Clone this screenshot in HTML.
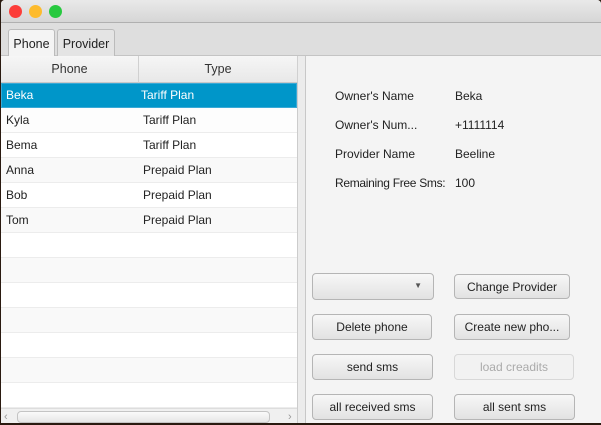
<!DOCTYPE html>
<html><head><style>
*{margin:0;padding:0;box-sizing:border-box}
body{width:601px;height:425px;background:#2a1a10;font-family:"Liberation Sans",sans-serif;font-size:12px;color:#222;position:relative;overflow:hidden}
.win{position:absolute;left:1px;top:0;width:600px;height:423px;background:#f4f4f4;overflow:hidden;border-radius:4px 4px 0 0}
.title{position:absolute;left:0;top:0;width:600px;height:23px;background:linear-gradient(#e9e9e9,#d6d6d6);border-bottom:1px solid #b0b0b0}
.dot{position:absolute;top:5px;width:13px;height:13px;border-radius:50%}
.tabs{position:absolute;left:0;top:23px;width:600px;height:33px;background:#dedede;border-bottom:1px solid #c4c4c4}
.tab{position:absolute;top:6px;height:27px;border:1px solid #bbb;border-bottom:none;border-radius:3px 3px 0 0;padding:7px 0 0;text-align:center;font-size:12.5px}
.table{position:absolute;left:0;top:56px;width:297px;height:367px;background:#fff;border-right:1px solid #ccc}
.hdr{position:absolute;top:0;height:27px;background:linear-gradient(#f6f6f6,#e8e8e8);border-right:1px solid #d0d0d0;border-bottom:1px solid #c8c8c8;text-align:center;line-height:27px;font-size:12.5px;color:#333}
.row{position:absolute;left:0;width:296px;height:25px;border-bottom:1px solid #ececec}
.row span{position:absolute;top:5px}
.c1{left:5px}.c2{left:142px}
.vl{position:absolute;left:137px;top:27px;width:1px;height:327px;background:#ececec}
.split{position:absolute;left:297px;top:56px;width:8px;height:367px;background:#ececec;border-right:1px solid #c8c8c8}
.lbl{position:absolute;font-size:12px;color:#222}
.btn{position:absolute;width:122px;height:26px;border:1px solid #b5b5b5;border-radius:4px;background:linear-gradient(#f7f7f7,#e2e2e2);text-align:center;line-height:24px;font-size:12px;color:#222}
</style></head><body>
<div class="win">
<div class="title">
<div class="dot" style="left:8px;background:#fc3d39"></div>
<div class="dot" style="left:28px;background:#fdbb2d"></div>
<div class="dot" style="left:48px;background:#27c93f"></div>
</div>
<div class="tabs">
<div class="tab" style="left:7px;width:47px;background:#f4f4f4;height:28px">Phone</div>
<div class="tab" style="left:56px;width:58px;background:#e4e4e4">Provider</div>
</div>
<div class="table">
<div class="hdr" style="left:0;width:138px">Phone</div>
<div class="hdr" style="left:138px;width:159px">Type</div>
<div class="vl"></div>
<div class="row" style="top:27px;background:#0096c9;color:#fff;border:1px solid #39a9d6"><span style="left:4px;top:4px">Beka</span><span style="left:139px;top:4px">Tariff Plan</span></div>
<div class="row" style="top:52px;background:#fdfdfd"><span class="c1">Kyla</span><span class="c2">Tariff Plan</span></div>
<div class="row" style="top:77px;background:#fff"><span class="c1">Bema</span><span class="c2">Tariff Plan</span></div>
<div class="row" style="top:102px;background:#f9f9f9"><span class="c1">Anna</span><span class="c2">Prepaid Plan</span></div>
<div class="row" style="top:127px;background:#fff"><span class="c1">Bob</span><span class="c2">Prepaid Plan</span></div>
<div class="row" style="top:152px;background:#f9f9f9"><span class="c1">Tom</span><span class="c2">Prepaid Plan</span></div>
<div class="row" style="top:177px;background:#fff"></div>
<div class="row" style="top:202px;background:#f9f9f9"></div>
<div class="row" style="top:227px;background:#fff"></div>
<div class="row" style="top:252px;background:#f9f9f9"></div>
<div class="row" style="top:277px;background:#fff"></div>
<div class="row" style="top:302px;background:#f9f9f9"></div>
<div class="row" style="top:327px;background:#fff"></div>
<div style="position:absolute;left:0;top:352px;width:296px;height:15px;background:#f0f0f0;border-top:1px solid #ddd">
<div style="position:absolute;left:3px;top:2px;color:#999;font-size:11px">‹</div>
<div style="position:absolute;left:16px;top:2px;width:253px;height:12px;border:1px solid #c4c4c4;border-radius:4px;background:linear-gradient(#fafafa,#e6e6e6)"></div>
<div style="position:absolute;left:287px;top:2px;color:#999;font-size:11px">›</div>
</div>
</div>
<div class="split"></div>
<div class="lbl" style="left:334px;top:89px">Owner's Name</div>
<div class="lbl" style="left:454px;top:89px">Beka</div>
<div class="lbl" style="left:334px;top:118px">Owner's Num...</div>
<div class="lbl" style="left:454px;top:118px">+1111114</div>
<div class="lbl" style="left:334px;top:147px">Provider Name</div>
<div class="lbl" style="left:454px;top:147px">Beeline</div>
<div class="lbl" style="left:334px;top:176px;letter-spacing:-0.3px">Remaining Free Sms:</div>
<div class="lbl" style="left:454px;top:176px">100</div>
<div class="btn" style="left:311px;top:273px;height:27px"><span style="position:absolute;right:11px;top:0;font-size:8px;color:#555">▼</span></div>
<div class="btn" style="left:453px;top:274px;width:116px;height:25px">Change Provider</div>
<div class="btn" style="left:311px;top:314px;width:120px">Delete phone</div>
<div class="btn" style="left:453px;top:314px;width:116px">Create new pho...</div>
<div class="btn" style="left:311px;top:354px;width:121px">send sms</div>
<div class="btn" style="left:453px;top:354px;width:120px;color:#aaa;background:#f2f2f2;border-color:#d8d8d8">load creadits</div>
<div class="btn" style="left:311px;top:394px;width:121px">all received sms</div>
<div class="btn" style="left:453px;top:394px;width:121px">all sent sms</div>
</div>
</body></html>
